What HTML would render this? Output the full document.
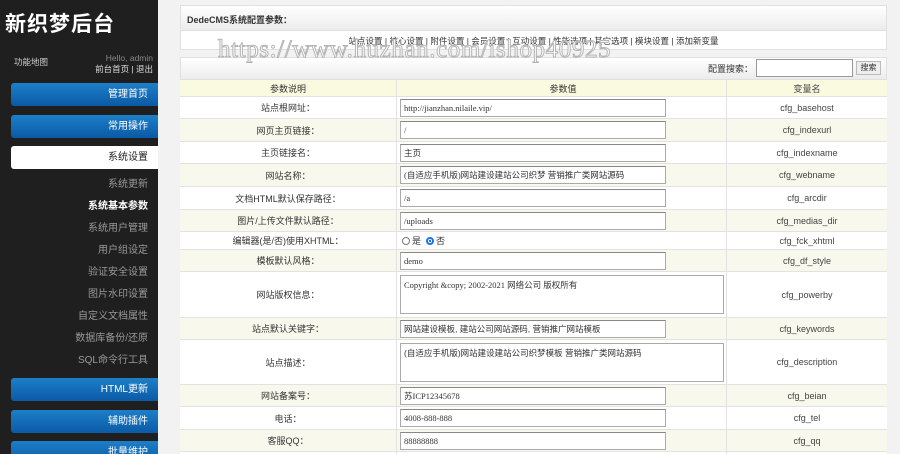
<!DOCTYPE html>
<html><head><meta charset="utf-8"><style>
*{margin:0;padding:0;box-sizing:border-box}
html,body{width:900px;height:454px;overflow:hidden}
body{background:#f2f2f2;font-family:"Liberation Sans","Noto Sans CJK SC",sans-serif;font-size:9px;color:#333;position:relative}
.sb{position:absolute;left:0;top:0;width:158px;height:454px;background:#1f1f1f}
.logo{position:absolute;left:5px;top:8px;color:#fff;font-size:21px;font-weight:bold;letter-spacing:1px}
.btn{position:absolute;left:11px;width:147px;height:23px;border-radius:3px 0 0 3px;background:linear-gradient(#1d7fc8,#0b5aa6);color:#fff;text-align:right;padding-right:10px;font-size:10px;line-height:23px}
.btn.w{background:#fff;color:#222}
.sub{position:absolute;right:10px;color:#999;font-size:10px;text-align:right}
.sub.a{color:#fff;font-weight:bold}
.p{position:absolute;left:180px;width:707px;background:#fff;border:1px solid #e0e0e0}
.r{position:absolute;left:180px;width:707px;border-bottom:1px solid #e2e2e2;font-size:9px}
.r>div{position:absolute;top:0;height:100%;display:flex;align-items:center;justify-content:center;border-right:1px solid #e2e2e2}
.r>.c1{left:0;width:217px}.r>.c2{left:217px;width:330px;justify-content:flex-start;padding-left:3px}.r>.c3{left:547px;width:160px;border-right:0;color:#444}
.y{background:#f8f8ec}.wh{background:#fff}
.in{width:266px;height:18px;border:1px solid #aaa;border-top-color:#888;background:#fff;font-family:"Liberation Serif","Noto Sans CJK SC",serif;font-size:8.5px;padding:3px;line-height:11px;white-space:nowrap;overflow:hidden}
.ta{width:324px;border:1px solid #aaa;background:#fff;font-family:"Liberation Serif","Noto Sans CJK SC",serif;font-size:8.5px;padding:3px;align-self:flex-start;margin-top:3px}
</style></head><body>
<div class="sb">
<div class="logo">新织梦后台</div>
<div style="position:absolute;left:14px;top:56px;color:#ccc;font-size:8.5px">功能地图</div>
<div style="position:absolute;right:5px;top:53px;color:#888;font-size:8.5px;text-align:right;line-height:11px">Hello, admin<br><span style="color:#ddd">前台首页 | 退出</span></div>
<div class="btn" style="top:83px">管理首页</div>
<div class="btn" style="top:115px">常用操作</div>
<div class="btn w" style="top:146px">系统设置</div>
<div class="sub" style="top:175px">系统更新</div>
<div class="sub a" style="top:197px">系统基本参数</div>
<div style="position:absolute;left:154px;top:199px;width:0;height:0;border:4px solid transparent;border-right-color:#f2f2f2"></div>
<div class="sub" style="top:219px">系统用户管理</div>
<div class="sub" style="top:241px">用户组设定</div>
<div class="sub" style="top:263px">验证安全设置</div>
<div class="sub" style="top:285px">图片水印设置</div>
<div class="sub" style="top:307px">自定义文档属性</div>
<div class="sub" style="top:329px">数据库备份/还原</div>
<div class="sub" style="top:351px">SQL命令行工具</div>
<div class="btn" style="top:378px">HTML更新</div>
<div class="btn" style="top:410px">辅助插件</div>
<div class="btn" style="top:441px">批量维护</div>
</div>
<div class="p" style="top:5px;height:45px">
<div style="height:25px;background:linear-gradient(#fff,#ececec);border-bottom:1px solid #e0e0e0;padding:7px 6px;font-weight:bold;font-size:9px">DedeCMS系统配置参数：</div>
<div style="text-align:center;padding-top:4px;font-size:8.5px;color:#333">站点设置 | 核心设置 | 附件设置 | 会员设置 | 互动设置 | 性能选项 | 其它选项 | 模块设置 | 添加新变量</div>
</div>
<div class="p" style="top:57px;height:400px;background:#fff"></div>
<div style="position:absolute;left:181px;top:58px;width:705px;height:22px;background:linear-gradient(#fff,#ececec);border-bottom:1px solid #e0e0e0"></div>
<div style="position:absolute;left:708px;top:62px;font-size:9px">配置搜索：</div>
<div style="position:absolute;left:756px;top:59px;width:97px;height:18px;border:1px solid #999;background:#fff"></div>
<div style="position:absolute;left:856px;top:61px;width:25px;height:14px;border:1px solid #bbb;background:#eee;font-size:8px;text-align:center;line-height:12px">搜索</div>
<div style="position:absolute;left:218px;top:36px;font-family:'Liberation Serif',serif;font-size:25px;color:#fff;-webkit-text-stroke:1px #b5b5b5;letter-spacing:0.6px">https://www.huzhan.com/ishop40925</div>
<div class="r" style="top:80px;height:17px;background:#fafae0"><div class="c1">参数说明</div><div class="c2" style="justify-content:center">参数值</div><div class="c3">变量名</div></div>
<div class="r wh" style="top:97px;height:22px"><div class="c1">站点根网址：</div><div class="c2"><div class="in">http://jianzhan.nilaile.vip/</div></div><div class="c3">cfg_basehost</div></div>
<div class="r y" style="top:119px;height:23px"><div class="c1">网页主页链接：</div><div class="c2"><div class="in">/</div></div><div class="c3">cfg_indexurl</div></div>
<div class="r wh" style="top:142px;height:22px"><div class="c1">主页链接名：</div><div class="c2"><div class="in">主页</div></div><div class="c3">cfg_indexname</div></div>
<div class="r y" style="top:164px;height:23px"><div class="c1">网站名称：</div><div class="c2"><div class="in">(自适应手机版)网站建设建站公司织梦 营销推广类网站源码</div></div><div class="c3">cfg_webname</div></div>
<div class="r wh" style="top:187px;height:23px"><div class="c1">文档HTML默认保存路径：</div><div class="c2"><div class="in">/a</div></div><div class="c3">cfg_arcdir</div></div>
<div class="r y" style="top:210px;height:22px"><div class="c1">图片/上传文件默认路径：</div><div class="c2"><div class="in">/uploads</div></div><div class="c3">cfg_medias_dir</div></div>
<div class="r wh" style="top:232px;height:18px"><div class="c1">编辑器(是/否)使用XHTML：</div><div class="c2"><span style="display:inline-block;width:8px;height:8px;border:1px solid #777;border-radius:50%;margin:0 2px"></span>是 <span style="display:inline-block;width:8px;height:8px;border:2px solid #1a73e8;border-radius:50%;margin:0 2px 0 5px;background:radial-gradient(#1a73e8 40%,#fff 45%)"></span>否</div><div class="c3">cfg_fck_xhtml</div></div>
<div class="r y" style="top:250px;height:22px"><div class="c1">模板默认风格：</div><div class="c2"><div class="in">demo</div></div><div class="c3">cfg_df_style</div></div>
<div class="r wh" style="top:272px;height:46px"><div class="c1">网站版权信息：</div><div class="c2"><div class="ta" style="height:39px">Copyright &amp;copy; 2002-2021 网络公司 版权所有</div></div><div class="c3">cfg_powerby</div></div>
<div class="r y" style="top:318px;height:22px"><div class="c1">站点默认关键字：</div><div class="c2"><div class="in" style="font-family:'Liberation Sans','Noto Sans CJK SC',sans-serif">网站建设模板, 建站公司网站源码, 营销推广网站模板</div></div><div class="c3">cfg_keywords</div></div>
<div class="r wh" style="top:340px;height:45px"><div class="c1">站点描述：</div><div class="c2"><div class="ta" style="height:39px;font-family:'Liberation Sans','Noto Sans CJK SC',sans-serif">(自适应手机版)网站建设建站公司织梦模板 营销推广类网站源码</div></div><div class="c3">cfg_description</div></div>
<div class="r y" style="top:385px;height:22px"><div class="c1">网站备案号：</div><div class="c2"><div class="in">苏ICP12345678</div></div><div class="c3">cfg_beian</div></div>
<div class="r wh" style="top:407px;height:23px"><div class="c1">电话：</div><div class="c2"><div class="in">4008-888-888</div></div><div class="c3">cfg_tel</div></div>
<div class="r y" style="top:430px;height:22px"><div class="c1">客服QQ：</div><div class="c2"><div class="in">88888888</div></div><div class="c3">cfg_qq</div></div>
<div class="r wh" style="top:452px;height:22px"><div class="c1"></div><div class="c2"></div><div class="c3"></div></div>
</body></html>
